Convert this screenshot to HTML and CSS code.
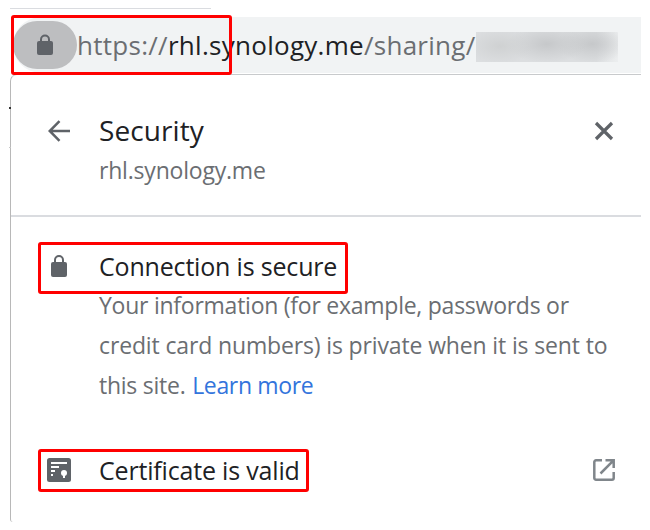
FILE: index.html
```
<!DOCTYPE html>
<html lang="en">
  <head>
    <meta charset="UTF-8" />
    <meta name="viewport" content="width=device-width, initial-scale=1.0" />
    <title>Security</title>
    <link rel="stylesheet" href="styles.css">
  </head>
  <body>
    <div class="browser">
      <div class="toolbar-line"></div>
      <div class="address-bar">
        <div class="lock-chip">
          <svg width="16" height="22" viewBox="0 0 16 22">
            <path d="M4 9V5.500a4 4 0 0 1 8 0V9" fill="none" stroke="#5f6368" stroke-width="2" />
            <rect x="0" y="7" width="16" height="14" rx="2" fill="#5f6368" />
          </svg>
        </div>
        <div class="url">https://<span class="host">rhl.synology.me</span>/sharing/</div>
        <div class="redacted"></div>
        <div class="mark mark-url"></div>
      </div>

      <div class="popup">
        <div class="page-edge"></div>
        <div class="header">
          <svg class="back" width="22" height="22" viewBox="0 0 22 22" fill="none" stroke="#5f6368" stroke-width="2.5">
            <path d="M22 11H2M11.500 1.200L1.700 11l9.800 9.800" />
          </svg>
          <div class="heading">
            <div class="title">Security</div>
            <div class="site">rhl.synology.me</div>
          </div>
          <svg class="close" width="20" height="20" viewBox="0 0 20 20" fill="none" stroke="#5f6368" stroke-width="3.2">
            <path d="M2 2l16 16M18 2L2 18" />
          </svg>
        </div>

        <div class="row connection">
          <div class="icon">
            <svg width="16" height="22" viewBox="0 0 16 22">
              <path d="M4 9V5a4 4 0 0 1 8 0V9" fill="none" stroke="#5f6368" stroke-width="2" />
              <rect x="0" y="7" width="16" height="15" rx="2" fill="#5f6368" />
            </svg>
          </div>
          <div class="label">Connection is secure</div>
          <div class="mark mark-connection"></div>
        </div>
        <div class="details">
          <div class="line-1">Your information (for example, passwords or</div>
          <div class="line-2">credit card numbers) is private when it is sent to</div>
          <div class="line-3">this site. <a href="#">Learn more</a></div>
        </div>

        <div class="row certificate">
          <div class="icon">
            <svg width="24" height="24" viewBox="0 0 24 24">
              <rect width="24" height="24" rx="2.500" fill="#5f6368" />
              <path d="M4 5h16M4 9h8M4 13h4M4 17h2" stroke="#fff" stroke-width="2" />
              <circle cx="17" cy="15" r="3" fill="#fff" />
              <path d="M17 16v4" stroke="#fff" stroke-width="2" />
            </svg>
          </div>
          <div class="label">Certificate is valid</div>
          <svg class="open" width="22" height="22" viewBox="0 0 22 22" fill="none" stroke="#80868b" stroke-width="2.500">
            <path d="M9 1.300H3A1.700 1.700 0 0 0 1.300 3v16A1.700 1.700 0 0 0 3 20.700h16a1.700 1.700 0 0 0 1.700-1.700v-6" />
            <path d="M12.500 1.300h8.200V9M20.300 1.700L7.500 14.500" />
          </svg>
          <div class="mark mark-certificate"></div>
        </div>
      </div>
    </div>
  </body>
</html>
```

FILE: styles.css
```
body {
  margin: 0;
  background: #fff;
  font-family: "Open Sans", "Noto Sans", sans-serif;
  color: #202124;
}

.browser {
  width: 631px;
  padding: 8px 0 0 10px;
}

.toolbar-line {
  width: 201px;
  height: 1px;
  background: #dadce0;
}

.address-bar {
  position: relative;
  display: flex;
  align-items: center;
  height: 56px;
  margin: 8px 0 1px 3px;
  background: #f1f3f4;
  border-radius: 28px 0 0 28px;
}

.lock-chip {
  display: flex;
  align-items: center;
  justify-content: center;
  width: 64px;
  height: 48px;
  border-radius: 24px;
  background: #bdbec0;
}

.url {
  width: 399px;
  font-size: 26px;
  letter-spacing: 0.28px;
  white-space: nowrap;
  color: #6b6e72;
}

.host {
  color: #202124;
}

.redacted {
  width: 142px;
  height: 30px;
  margin-top: 4px;
  background:
    radial-gradient(ellipse 34px 18px at 24px 14px, #cfd1d2, transparent),
    radial-gradient(ellipse 40px 19px at 71px 12px, #c6c8ca, transparent),
    radial-gradient(ellipse 36px 19px at 116px 12px, #c6c8ca, transparent),
    linear-gradient(to right, #dcdee0 120px, #eceeef);
}

.popup {
  position: relative;
  box-sizing: border-box;
  height: 448px;
  border-top: 1px solid #c8cacc;
  border-left: 1px solid #b8b8b8;
  border-radius: 7px 0 0 3px;
}

/* sliver of the page showing beside the popup */
.page-edge {
  position: absolute;
  left: -2px;
  top: 32px;
  width: 2px;
  height: 38px;
  border-top: 2px solid #333;
  border-bottom: 1px solid #c8c8c8;
}

.header {
  display: flex;
  align-items: flex-start;
  box-sizing: border-box;
  height: 142px;
  padding: 35px 27px 0 37px;
  border-bottom: 2px solid #dadce0;
}

.back {
  margin-top: 10px;
}

.heading {
  flex: 1;
  margin-left: 29px;
  line-height: 40px;
}

.title {
  font-size: 28px;
  letter-spacing: 0.1px;
}

.site {
  font-size: 23px;
  letter-spacing: -0.2px;
  color: #6b6e72;
}

.close {
  margin-top: 11px;
}

.row {
  position: relative;
  display: flex;
  align-items: center;
  padding: 0 26px 0 36px;
}

.icon {
  display: flex;
  justify-content: center;
  width: 24px;
  margin-right: 28px;
}

.label {
  flex: 1;
  font-size: 25px;
  letter-spacing: -0.18px;
  white-space: nowrap;
}

.connection {
  height: 38px;
  margin-top: 30px;
}

.details {
  padding-left: 88px;
  font-size: 23px;
  line-height: 40px;
  letter-spacing: -0.25px;
  white-space: nowrap;
  color: #6b6e72;
}

.details .line-2 {
  letter-spacing: -0.14px;
}

.details a {
  margin-left: 1px;
  letter-spacing: -0.35px;
  color: #3374dc;
  text-decoration: none;
}

.certificate {
  height: 40px;
  margin-top: 45px;
}

/* red callouts */
.mark {
  position: absolute;
  box-sizing: border-box;
  border: 3px solid #f00;
  border-radius: 3px;
}

.mark-url {
  left: -2px;
  top: -2px;
  width: 221px;
  height: 60px;
  z-index: 1;
}

.mark-connection {
  left: 27px;
  top: -5px;
  width: 310px;
  height: 52px;
}

.mark-certificate {
  left: 27px;
  top: -1px;
  width: 271px;
  height: 43px;
}
```
